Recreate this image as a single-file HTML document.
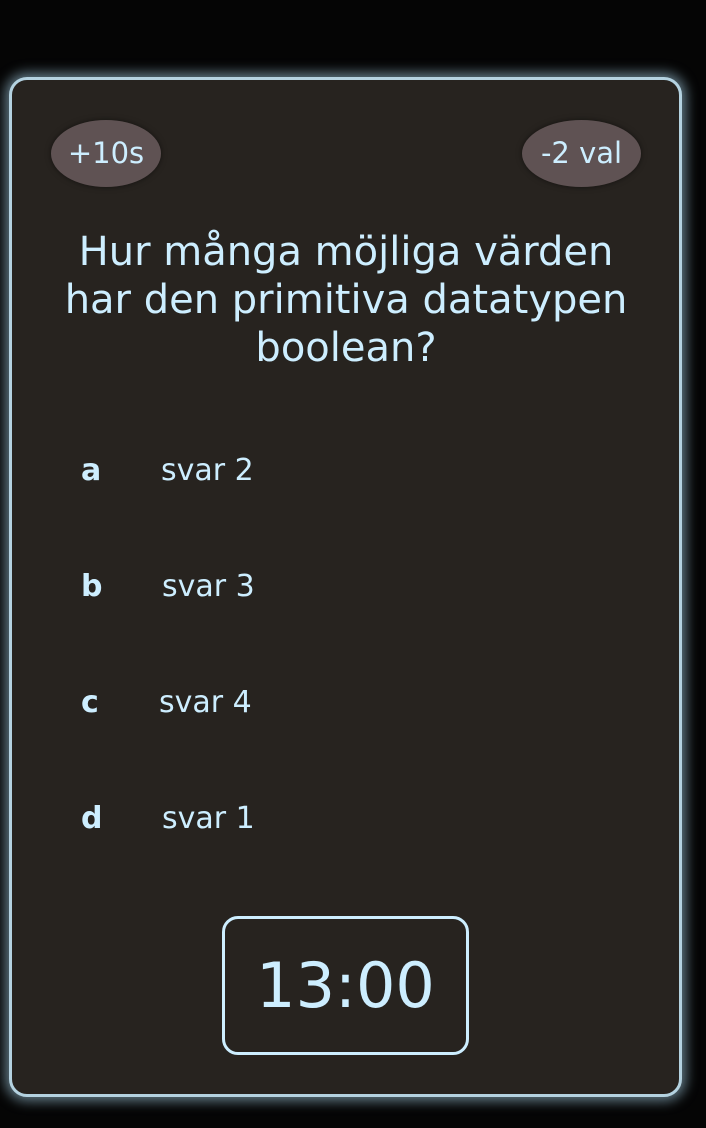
<!DOCTYPE html>
<html><head><style>
body{margin:0;width:706px;height:1128px;background:#050505;overflow:hidden;font-family:"DejaVu Sans",Verdana,sans-serif;color:#cdeeff;position:relative}
.card{position:absolute;left:9px;top:77px;width:667px;height:1014px;background:#27231f;border:3px solid #b4d2e0;border-radius:18px;box-shadow:0 0 12px 4px rgba(160,200,220,.6)}
.pill{position:absolute;top:120px;height:67px;background:#5f5253;border-radius:50%;font-size:29px;line-height:67px;text-align:center;box-shadow:0 0 6px rgba(0,0,0,.5)}
.q{position:absolute;left:53px;width:586px;top:228px;font-size:40px;line-height:48px;text-align:center}
.opt{position:absolute;font-size:30px;line-height:40px}
.l{left:81px;font-weight:bold}
.t{left:161px}
.timer{position:absolute;left:222px;top:916px;width:241px;height:133px;border:3px solid #cdeeff;border-radius:16px;font-size:62px;line-height:133px;text-align:center}
</style></head><body>
<div class="card"></div>
<div class="pill" style="left:51px;width:110px">+10s</div>
<div class="pill" style="left:522px;width:119px">-2 val</div>
<div class="q">Hur många möjliga värden har den primitiva datatypen boolean?</div>
<div class="opt l" style="top:451px">a</div><div class="opt t" style="top:451px">svar 2</div>
<div class="opt l" style="top:567px">b</div><div class="opt t" style="top:567px;left:162px">svar 3</div>
<div class="opt l" style="top:683px">c</div><div class="opt t" style="top:683px;left:159px">svar 4</div>
<div class="opt l" style="top:799px">d</div><div class="opt t" style="top:799px;left:162px">svar 1</div>
<div class="timer">13:00</div>
</body></html>
